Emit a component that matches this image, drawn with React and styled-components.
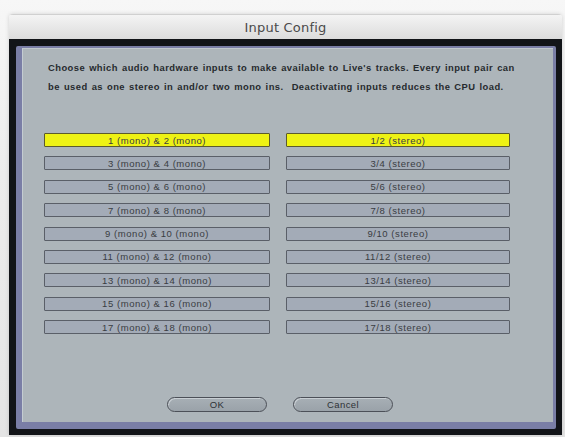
import React from 'react';
import styled, { createGlobalStyle } from 'styled-components';

const GlobalStyle = createGlobalStyle`
  html, body {
    margin: 0;
    padding: 0;
    background: #ededed;
  }
  body {
    width: 565px;
    height: 437px;
    overflow: hidden;
    font-family: "DejaVu Sans", "Liberation Sans", sans-serif;
  }
`;

const Page = styled.div`
  width: 565px;
  height: 437px;
  box-sizing: border-box;
  padding: 14px 3px 2px 9px;
  background: linear-gradient(to bottom, #f7f7f7 0%, #ececec 40%, #e4e4e4 100%);
`;

const Window = styled.div`
  height: 100%;
  display: flex;
  flex-direction: column;
  border-radius: 4px 4px 0 0;
  overflow: hidden;
  box-shadow: 0 0 4px rgba(0, 0, 0, 0.15);
`;

const TitleBar = styled.div`
  height: 24px;
  flex: none;
  display: flex;
  align-items: center;
  justify-content: center;
  background: linear-gradient(to bottom, #f4f4f4, #dcdcdc);
  border-top: 1px solid #d0d0d0;
  color: #4a4a4a;
  font-size: 13px;
  letter-spacing: 0.2px;
`;

const Frame = styled.div`
  flex: 1;
  display: flex;
  background: #121418;
  padding: 7px 6px 6px 7px;
`;

const Bevel = styled.div`
  flex: 1;
  display: flex;
  background: #7a7ea6;
  padding: 2px 3px 7px 6px;
  border-radius: 2px;
`;

const Panel = styled.div`
  flex: 1;
  display: flex;
  flex-direction: column;
  background: #adb5ba;
  border-left: 1px solid #c4ccd2;
  border-top: 1px solid #c0c8ce;
  padding: 9px 0 0 21px;
`;

const Intro = styled.p`
  margin: 0 0 0 4px;
  font-family: "Liberation Sans", sans-serif;
  font-weight: bold;
  font-size: 9.4px;
  letter-spacing: 0.45px;
  line-height: 19px;
  color: #262a2e;
  word-spacing: 1px;
  white-space: nowrap;
`;

const Grid = styled.div`
  margin-top: 37px;
  width: 466px;
  display: grid;
  grid-template-columns: 226px 224px;
  column-gap: 16px;
  row-gap: 9.4px;
`;

const Cell = styled.div`
  height: 14px;
  box-sizing: border-box;
  display: flex;
  align-items: center;
  justify-content: center;
  background: ${p => (p.$on ? '#eef214' : '#a3abb7')};
  border: 1px solid ${p => (p.$on ? '#5c5a2c' : '#5a5f68')};
  border-radius: 1px;
  font-family: "Liberation Sans", sans-serif;
  font-size: 9.5px;
  letter-spacing: 0.55px;
  color: #3a3d42;
`;

const Buttons = styled.div`
  margin-top: auto;
  margin-bottom: 10px;
  padding-left: 123px;
  display: flex;
  gap: 26px;
`;

const Button = styled.div`
  width: 100px;
  height: 15px;
  box-sizing: border-box;
  display: flex;
  align-items: center;
  justify-content: center;
  border: 1px solid #4c5058;
  border-radius: 8px;
  background: linear-gradient(to bottom, #a7afb5, #9aa2a9);
  box-shadow: inset 1px 1px 0 #c8ced3;
  font-family: "Liberation Sans", sans-serif;
  font-size: 9.5px;
  letter-spacing: 0.4px;
  color: #2e3236;
`;

const rows = [
  ['1 (mono) & 2 (mono)', '1/2 (stereo)'],
  ['3 (mono) & 4 (mono)', '3/4 (stereo)'],
  ['5 (mono) & 6 (mono)', '5/6 (stereo)'],
  ['7 (mono) & 8 (mono)', '7/8 (stereo)'],
  ['9 (mono) & 10 (mono)', '9/10 (stereo)'],
  ['11 (mono) & 12 (mono)', '11/12 (stereo)'],
  ['13 (mono) & 14 (mono)', '13/14 (stereo)'],
  ['15 (mono) & 16 (mono)', '15/16 (stereo)'],
  ['17 (mono) & 18 (mono)', '17/18 (stereo)'],
];

export default function App() {
  return (
    <Page>
      <GlobalStyle />
      <Window>
        <TitleBar>Input Config</TitleBar>
        <Frame>
          <Bevel>
            <Panel>
              <Intro>
                Choose which audio hardware inputs to make available to Live's tracks. Every input pair can
                <br />
                be used as one stereo in and/or two mono ins.&nbsp; Deactivating inputs reduces the CPU load.
              </Intro>
              <Grid>
                {rows.map(([mono, stereo], i) => (
                  <React.Fragment key={i}>
                    <Cell $on={i === 0}>{mono}</Cell>
                    <Cell $on={i === 0}>{stereo}</Cell>
                  </React.Fragment>
                ))}
              </Grid>
              <Buttons>
                <Button>OK</Button>
                <Button>Cancel</Button>
              </Buttons>
            </Panel>
          </Bevel>
        </Frame>
      </Window>
    </Page>
  );
}
